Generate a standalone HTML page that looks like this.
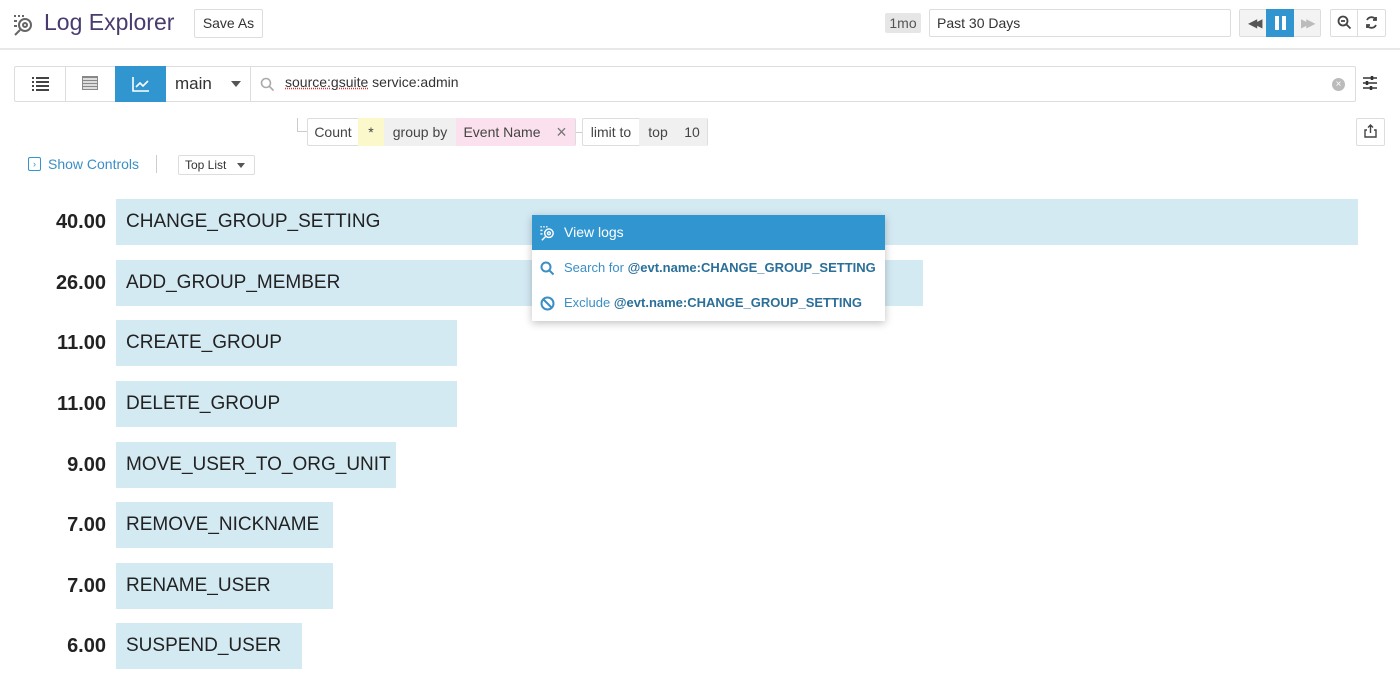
<!DOCTYPE html>
<html><head><meta charset="utf-8"><style>
*{box-sizing:border-box;margin:0;padding:0}
body{width:1400px;height:678px;background:#fff;font-family:"Liberation Sans",sans-serif;position:relative;overflow:hidden;color:#333}
.a{position:absolute}
.btn{position:absolute;border:1px solid #ddd;border-radius:2px;background:#fff}
.bar{position:absolute;left:116px;height:46px;background:#d4eaf3;font-size:19px;line-height:46px;padding-left:10px;color:#222;white-space:nowrap}
.num{position:absolute;left:0;width:106px;text-align:right;font-size:20px;font-weight:bold;line-height:46px;color:#222}
.seg{position:absolute;top:118px;height:28px;line-height:28px;font-size:14px;color:#444;text-align:center}
.mi{height:35px;font-size:13px;line-height:35px;padding-left:32px;color:#3b8fc6;position:relative;white-space:nowrap}
</style></head><body>
<svg class="a" style="left:12px;top:12px" width="24" height="24" viewBox="0 0 24 24" fill="none" stroke="#666" stroke-width="2"><path d="M2 4h2M6 4h2M10 4h2M2 9h3M2 14h3"/><circle cx="13" cy="13" r="6"/><circle cx="13" cy="13" r="2"/><path d="M8 18l-5 5"/></svg>
<div class="a" style="left:44px;top:9px;font-size:23px;color:#4a3b6e">Log Explorer</div>
<div class="btn" style="left:194px;top:9px;width:69px;height:29px;font-size:14px;line-height:27px;text-align:center;color:#333">Save As</div>
<div class="a" style="left:885px;top:13px;width:36px;height:20px;background:#e6e6e6;font-size:14px;line-height:20px;text-align:center;color:#555;border-radius:2px">1mo</div>
<div class="btn" style="left:929px;top:9px;width:302px;height:28px;font-size:14px;line-height:26px;padding-left:7px;color:#333">Past 30 Days</div>
<div class="btn" style="left:1239px;top:9px;width:82px;height:28px;background:#f3f3f3"></div>
<div class="a" style="left:1248px;top:16px;font-size:12px;color:#555;letter-spacing:-4px">◀◀</div>
<div class="a" style="left:1266px;top:9px;width:28px;height:28px;background:#3196cf"></div>
<div class="a" style="left:1275px;top:16px;width:4px;height:14px;background:#fff"></div><div class="a" style="left:1282px;top:16px;width:4px;height:14px;background:#fff"></div>
<div class="a" style="left:1301px;top:16px;font-size:12px;color:#bbb;letter-spacing:-4px">▶▶</div>
<div class="btn" style="left:1330px;top:9px;width:56px;height:28px"></div>
<div class="a" style="left:1357px;top:10px;width:1px;height:26px;background:#ddd"></div>
<svg class="a" style="left:1337px;top:15px" width="15" height="15" viewBox="0 0 15 15" fill="none" stroke="#444" stroke-width="1.8"><circle cx="6" cy="6" r="4.5"/><path d="M4 6h4M9.5 9.5l4 4"/></svg>
<svg class="a" style="left:1364px;top:15px" width="15" height="15" viewBox="0 0 15 15" fill="none" stroke="#444" stroke-width="1.8"><path d="M12 5A5 5 0 0 0 3 5M3 10a5 5 0 0 0 9 0"/><path d="M12 2v3h-3M3 13v-3h3"/></svg>
<div class="a" style="left:0;top:48px;width:1400px;height:2px;background:#e8e8e8"></div>
<div class="btn" style="left:14px;top:66px;width:1342px;height:36px"></div>
<div class="a" style="left:65px;top:67px;width:1px;height:34px;background:#ddd"></div>
<svg class="a" style="left:32px;top:77px" width="17" height="14" viewBox="0 0 17 14" stroke="#444" stroke-width="2"><path d="M0 1h2M4 1h13M0 5h2M4 5h13M0 9h2M4 9h13M0 13h2M4 13h13"/></svg>
<div class="a" style="left:82px;top:76px;width:16px;height:14px;border:1px solid #888;background:repeating-linear-gradient(#888 0 1px,#ddd 1px 3px)"></div>
<div class="a" style="left:115px;top:66px;width:51px;height:36px;background:#3196cf"></div>
<svg class="a" style="left:132px;top:76px" width="18" height="16" viewBox="0 0 18 16" fill="none" stroke="#fff" stroke-width="1.6"><path d="M1 1v14h16"/><path d="M4 11l4-4 3 3 5-5"/></svg>
<div class="a" style="left:175px;top:74px;font-size:17px;color:#333">main</div>
<div class="a" style="left:231px;top:81px;width:0;height:0;border-left:5px solid transparent;border-right:5px solid transparent;border-top:6px solid #555"></div>
<div class="a" style="left:250px;top:67px;width:1px;height:34px;background:#ddd"></div>
<svg class="a" style="left:260px;top:77px" width="15" height="15" viewBox="0 0 15 15" fill="none" stroke="#aaa" stroke-width="1.6"><circle cx="6" cy="6" r="4.5"/><path d="M9.5 9.5l4 4"/></svg>
<div class="a" style="left:285px;top:74px;font-size:14px;color:#333"><span style="text-decoration:underline dotted #d33">source:gsuite</span> service:admin</div>
<div class="a" style="left:1332px;top:78px;width:13px;height:13px;border-radius:50%;background:#bbb;color:#fff;font-size:10px;line-height:13px;text-align:center">×</div>
<svg class="a" style="left:1362px;top:75px" width="16" height="16" viewBox="0 0 16 16" stroke="#333" stroke-width="1.6"><path d="M1 3h14M1 8h14M1 13h14"/><path d="M10 1v4M5 6v4M9 11v4" stroke-width="2.5"/></svg>
<div class="a" style="left:297px;top:118px;width:10px;height:14px;border-left:1px solid #ccc;border-bottom:1px solid #ccc"></div>
<div class="btn" style="left:307px;top:118px;width:269px;height:28px"></div>
<div class="seg" style="left:308px;width:50px">Count</div>
<div class="seg" style="left:358px;width:26px;background:#fbf8cc">*</div>
<div class="seg" style="left:384px;width:72px;background:#f0f0f0">group by</div>
<div class="seg" style="left:456px;width:92px;background:#fbe1ee">Event Name</div>
<div class="seg" style="left:548px;width:27px;background:#fbe1ee;font-size:18px;color:#777">×</div>
<div class="a" style="left:576px;top:132px;width:6px;height:1px;background:#ccc"></div>
<div class="btn" style="left:582px;top:118px;width:126px;height:28px"></div>
<div class="seg" style="left:583px;width:56px">limit to</div>
<div class="seg" style="left:639px;width:38px;background:#f0f0f0">top</div>
<div class="seg" style="left:677px;width:30px;background:#f0f0f0">10</div>
<div class="btn" style="left:1356px;top:118px;width:29px;height:28px"></div>
<svg class="a" style="left:1363px;top:124px" width="15" height="15" viewBox="0 0 15 15" fill="none" stroke="#444" stroke-width="1.4"><path d="M4 6H2v7h11V6h-2M7.5 9V1M5 3.5l2.5-2.5 2.5 2.5"/></svg>
<div class="a" style="left:28px;top:157px;width:13px;height:14px;border:1px solid #3196cf;border-radius:2px;font-size:9px;line-height:12px;text-align:center;color:#3196cf">›</div>
<div class="a" style="left:48px;top:156px;font-size:14px;color:#3b8fc6">Show Controls</div>
<div class="a" style="left:156px;top:155px;width:1px;height:18px;background:#ccc"></div>
<div class="btn" style="left:178px;top:155px;width:77px;height:20px;font-size:12px;line-height:18px;padding-left:6px;color:#333">Top List</div>
<div class="a" style="left:237px;top:163px;width:0;height:0;border-left:4px solid transparent;border-right:4px solid transparent;border-top:5px solid #555"></div>
<div class="num" style="top:199px">40.00</div><div class="bar" style="top:199px;width:1242px">CHANGE_GROUP_SETTING</div>
<div class="num" style="top:260px">26.00</div><div class="bar" style="top:260px;width:807px">ADD_GROUP_MEMBER</div>
<div class="num" style="top:320px">11.00</div><div class="bar" style="top:320px;width:341px">CREATE_GROUP</div>
<div class="num" style="top:381px">11.00</div><div class="bar" style="top:381px;width:341px">DELETE_GROUP</div>
<div class="num" style="top:442px">9.00</div><div class="bar" style="top:442px;width:280px">MOVE_USER_TO_ORG_UNIT</div>
<div class="num" style="top:502px">7.00</div><div class="bar" style="top:502px;width:217px">REMOVE_NICKNAME</div>
<div class="num" style="top:563px">7.00</div><div class="bar" style="top:563px;width:217px">RENAME_USER</div>
<div class="num" style="top:623px">6.00</div><div class="bar" style="top:623px;width:186px">SUSPEND_USER</div>
<div class="a" style="left:532px;top:215px;width:353px;height:106px;background:#fff;box-shadow:0 2px 8px rgba(0,0,0,.25)">
<div class="mi" style="background:#3196cf;color:#fff;font-size:14px">View logs
<svg style="position:absolute;left:7px;top:9px" width="17" height="17" viewBox="0 0 24 24" fill="none" stroke="#fff" stroke-width="2"><path d="M2 4h2M6 4h2M10 4h2M2 9h3M2 14h3"/><circle cx="14" cy="13" r="6"/><circle cx="14" cy="13" r="2"/><path d="M9 18l-5 5"/></svg></div>
<div class="mi">Search for <b style="color:#2a6f9a">@evt.name:CHANGE_GROUP_SETTING</b>
<svg style="position:absolute;left:8px;top:11px" width="15" height="15" viewBox="0 0 15 15" fill="none" stroke="#3b8fc6" stroke-width="2"><circle cx="6" cy="6" r="4.5"/><path d="M9.5 9.5l4 4"/></svg></div>
<div class="mi">Exclude <b style="color:#2a6f9a">@evt.name:CHANGE_GROUP_SETTING</b>
<svg style="position:absolute;left:8px;top:11px" width="15" height="15" viewBox="0 0 15 15" fill="none" stroke="#3b8fc6" stroke-width="2"><circle cx="7.5" cy="7.5" r="6"/><path d="M3.5 3.5l8 8"/></svg></div>
</div>
</body></html>
